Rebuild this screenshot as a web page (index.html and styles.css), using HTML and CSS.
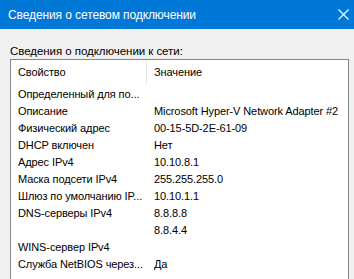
FILE: index.html
```html
<!DOCTYPE html>
<html lang="ru">

<head>
    <meta charset="UTF-8">
    <meta name="viewport" content="width=device-width, initial-scale=1.0">
    <title>Сведения о сетевом подключении</title>
    <link rel="stylesheet" href="styles.css">
</head>

<body>
    <div class="window">
        <div class="titlebar">
            <span class="title">Сведения о сетевом подключении</span>
            <svg class="close" width="11" height="11" viewBox="0 0 11 11">
                <path d="M0.5 0.5 L10.5 10.5 M10.5 0.5 L0.5 10.5" stroke="#fff" stroke-width="1.1" fill="none" />
            </svg>
        </div>
        <div class="content">
            <p class="caption">Сведения о подключении к сети:</p>
            <div class="list">
                <div class="list-head">
                    <div class="col-name">Свойство</div>
                    <div class="col-value">Значение</div>
                </div>
                <div class="row"><div class="col-name">Определенный для по...</div><div class="col-value"></div></div>
                <div class="row"><div class="col-name">Описание</div><div class="col-value">Microsoft Hyper-V Network Adapter #2</div></div>
                <div class="row"><div class="col-name">Физический адрес</div><div class="col-value">00-15-5D-2E-61-09</div></div>
                <div class="row"><div class="col-name">DHCP включен</div><div class="col-value">Нет</div></div>
                <div class="row"><div class="col-name">Адрес IPv4</div><div class="col-value">10.10.8.1</div></div>
                <div class="row"><div class="col-name">Маска подсети IPv4</div><div class="col-value">255.255.255.0</div></div>
                <div class="row"><div class="col-name">Шлюз по умолчанию IP...</div><div class="col-value">10.10.1.1</div></div>
                <div class="row"><div class="col-name">DNS-серверы IPv4</div><div class="col-value">8.8.8.8</div></div>
                <div class="row"><div class="col-name"></div><div class="col-value">8.8.4.4</div></div>
                <div class="row"><div class="col-name">WINS-сервер IPv4</div><div class="col-value"></div></div>
                <div class="row"><div class="col-name">Служба NetBIOS через...</div><div class="col-value">Да</div></div>
            </div>
        </div>
    </div>
</body>

</html>
```

FILE: styles.css
```css
* {
    box-sizing: border-box;
}

body {
    margin: 0;
    padding: 0;
    width: 354px;
    height: 279px;
    overflow: hidden;
    background-color: #f0f0f0;
    font-family: "Liberation Sans", Arial, sans-serif;
    font-size: 11px;
    color: #000;
}

.window {
    width: 100%;
    height: 100%;
    display: flex;
    flex-direction: column;
}

.titlebar {
    height: 29px;
    flex-shrink: 0;
    background-color: #0078d7;
    color: #fff;
    display: flex;
    justify-content: space-between;
    align-items: center;
    padding: 0 5px 0 8px;
}

.title {
    font-size: 12px;
    letter-spacing: -0.1px;
}

.close {
    display: block;
}

.content {
    flex: 1;
    padding: 14px 5px 0 10px;
}

.caption {
    margin: 0;
    height: 16px;
    line-height: 16px;
    font-size: 11.5px;
    letter-spacing: -0.05px;
}

.list {
    background-color: #fff;
    border: 1px solid #828790;
    border-bottom: none;
    height: 230px;
}

.list-head,
.row {
    display: grid;
    grid-template-columns: 135px 1fr;
    letter-spacing: -0.1px;
}

.list-head {
    height: 26px;
    align-items: start;
}

.list-head .col-name {
    padding-left: 7px;
    line-height: 24px;
}

.list-head .col-value {
    border-left: 1px solid #e5e5e5;
    height: 24px;
    line-height: 24px;
    padding-left: 7px;
}

.row {
    height: 17px;
    line-height: 17px;
}

.row .col-name {
    padding-left: 7px;
    white-space: nowrap;
    overflow: hidden;
}

.row .col-value {
    padding-left: 8px;
    white-space: nowrap;
}
```
